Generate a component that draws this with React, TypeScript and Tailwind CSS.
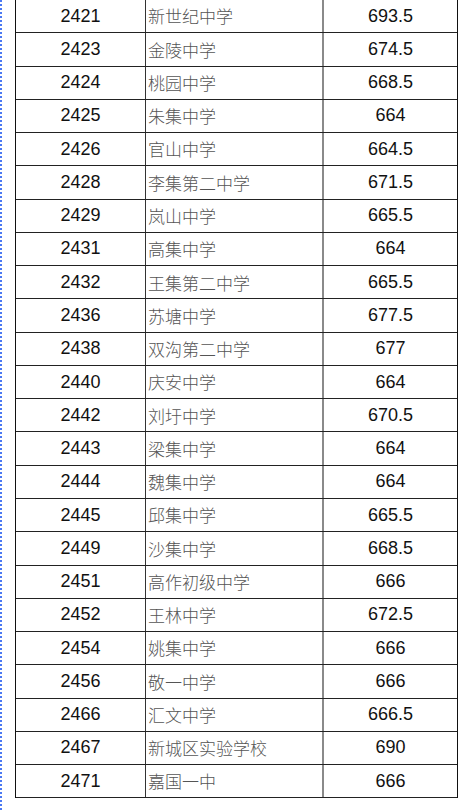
const rows: [string, string, string][] = [
  ["2421", "新世纪中学", "693.5"],
  ["2423", "金陵中学", "674.5"],
  ["2424", "桃园中学", "668.5"],
  ["2425", "朱集中学", "664"],
  ["2426", "官山中学", "664.5"],
  ["2428", "李集第二中学", "671.5"],
  ["2429", "岚山中学", "665.5"],
  ["2431", "高集中学", "664"],
  ["2432", "王集第二中学", "665.5"],
  ["2436", "苏塘中学", "677.5"],
  ["2438", "双沟第二中学", "677"],
  ["2440", "庆安中学", "664"],
  ["2442", "刘圩中学", "670.5"],
  ["2443", "梁集中学", "664"],
  ["2444", "魏集中学", "664"],
  ["2445", "邱集中学", "665.5"],
  ["2449", "沙集中学", "668.5"],
  ["2451", "高作初级中学", "666"],
  ["2452", "王林中学", "672.5"],
  ["2454", "姚集中学", "666"],
  ["2456", "敬一中学", "666"],
  ["2466", "汇文中学", "666.5"],
  ["2467", "新城区实验学校", "690"],
  ["2471", "嘉国一中", "666"],
];

export default function App() {
  return (
    <div className="relative w-[469px] h-[812px] bg-white overflow-hidden">
      {/* dashed page edge */}
      <div className="absolute left-0 top-0 h-full w-[2px] bg-[repeating-linear-gradient(to_bottom,#4a78f2_0_2px,transparent_2px_4px)]" />
      <div className="pl-[15px] -mt-[1px]">
        <div className="w-[443px] border-l border-r border-t border-[#111]">
          {rows.map((r) => (
            <div
              key={r[0]}
              className="flex h-[33.27px] border-b border-[#222]"
            >
              <div className="w-[130px] flex items-center justify-center border-r border-[#333] text-[18px] text-[#111] font-['Liberation_Sans',Arial,sans-serif]">
                {r[0]}
              </div>
              <div className="w-[176px] flex items-center pl-[2px] text-[17px] text-[#555] font-['Noto_Sans_CJK_SC',sans-serif] font-light">
                {r[1]}
              </div>
              <div className="w-[2px] bg-[#8a8a8a]" />
              <div className="flex-1 flex items-center justify-center text-[18px] text-[#111] font-['Liberation_Sans',Arial,sans-serif]">
                {r[2]}
              </div>
            </div>
          ))}
        </div>
      </div>
    </div>
  );
}
